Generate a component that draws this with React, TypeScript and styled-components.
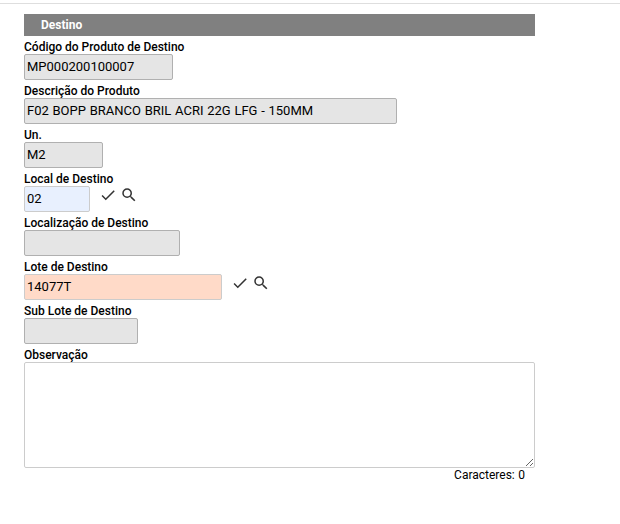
import React from "react";
import styled, { createGlobalStyle } from "styled-components";

const Global = createGlobalStyle`
  * { box-sizing: border-box; }
  body { margin: 0; background: #fff; color: #000; font-family: Roboto, sans-serif; }
`;

const Page = styled.main`
  height: 524px;
  padding: 3px 0 0;
  overflow: hidden;
`;

const Divider = styled.div`
  height: 1px;
  background: #dedede;
`;

const Form = styled.form`
  width: 511px;
  margin: 10px 0 0 24px;
`;

const Header = styled.h2`
  height: 22px;
  margin: 0 0 4px;
  padding-left: 17px;
  background: #808080;
  color: #fff;
  font-size: 12px;
  font-weight: 700;
  line-height: 22px;
`;

const Field = styled.div`
  height: 44px;
`;

const Label = styled.label`
  display: block;
  height: 14px;
  font-size: 12px;
  font-weight: 500;
  line-height: 14px;
  white-space: nowrap;
`;

const Row = styled.div`
  display: flex;
`;

const tones = {
  disabled: { bg: "#e5e5e5", border: "#b0b0b0" },
  filled: { bg: "#e8f0fe", border: "#cccccc" },
  alert: { bg: "#ffdac8", border: "#cccccc" },
};
type Tone = keyof typeof tones;

const Input = styled.input<{ $width: number; $tone: Tone }>`
  width: ${(p) => p.$width}px;
  height: 26px;
  padding: 0 2px 1px;
  border: 1px solid ${(p) => tones[p.$tone].border};
  border-radius: 2px;
  background: ${(p) => tones[p.$tone].bg};
  color: #000;
  font-family: Roboto, sans-serif;
  font-size: 13px;
  word-spacing: 0.5px;
  outline: none;
`;

const Actions = styled.div`
  display: flex;
  gap: 3px;
  margin-left: 9px;
`;

const Icon = styled.svg`
  width: 18px;
  height: 18px;
  fill: #333;
`;

const Notes = styled.textarea`
  display: block;
  width: 511px;
  height: 106px;
  border: 1px solid #ccc;
  border-radius: 2px;
  resize: both;
  outline: none;
`;

const Counter = styled.div`
  padding-right: 10px;
  font-size: 12px;
  line-height: 14px;
  text-align: right;
  word-spacing: 0.5px;
`;

const fields: { label: string; value: string; width: number; tone: Tone }[] = [
  { label: "Código do Produto de Destino", value: "MP000200100007", width: 149, tone: "disabled" },
  { label: "Descrição do Produto", value: "F02 BOPP BRANCO BRIL ACRI 22G LFG - 150MM", width: 373, tone: "disabled" },
  { label: "Un.", value: "M2", width: 79, tone: "disabled" },
  { label: "Local de Destino", value: "02", width: 66, tone: "filled" },
  { label: "Localização de Destino", value: "", width: 156, tone: "disabled" },
  { label: "Lote de Destino", value: "14077T", width: 198, tone: "alert" },
  { label: "Sub Lote de Destino", value: "", width: 114, tone: "disabled" },
];

export default function App() {
  return (
    <>
      <Global />
      <Page>
        <Divider />
        <Form>
          <Header>Destino</Header>
          {fields.map((f) => (
            <Field key={f.label}>
              <Label>{f.label}</Label>
              <Row>
                <Input $width={f.width} $tone={f.tone} defaultValue={f.value} readOnly={f.tone === "disabled"} />
                {f.tone !== "disabled" && (
                  <Actions>
                    <Icon viewBox="0 0 24 24"><path d="M9 16.17 4.83 12l-1.42 1.41L9 19 21 7l-1.41-1.41z" /></Icon>
                    <Icon viewBox="0 0 24 24"><path d="M15.5 14h-.79l-.28-.27A6.47 6.47 0 0 0 16 9.5 6.5 6.5 0 1 0 9.5 16c1.61 0 3.09-.59 4.23-1.57l.27.28v.79l5 4.99L20.49 19zm-6 0C7.01 14 5 11.99 5 9.5S7.01 5 9.5 5 14 7.01 14 9.5 11.99 14 9.5 14" /></Icon>
                  </Actions>
                )}
              </Row>
            </Field>
          ))}
          <Label>Observação</Label>
          <Notes />
          <Counter>Caracteres: 0</Counter>
        </Form>
      </Page>
    </>
  );
}
